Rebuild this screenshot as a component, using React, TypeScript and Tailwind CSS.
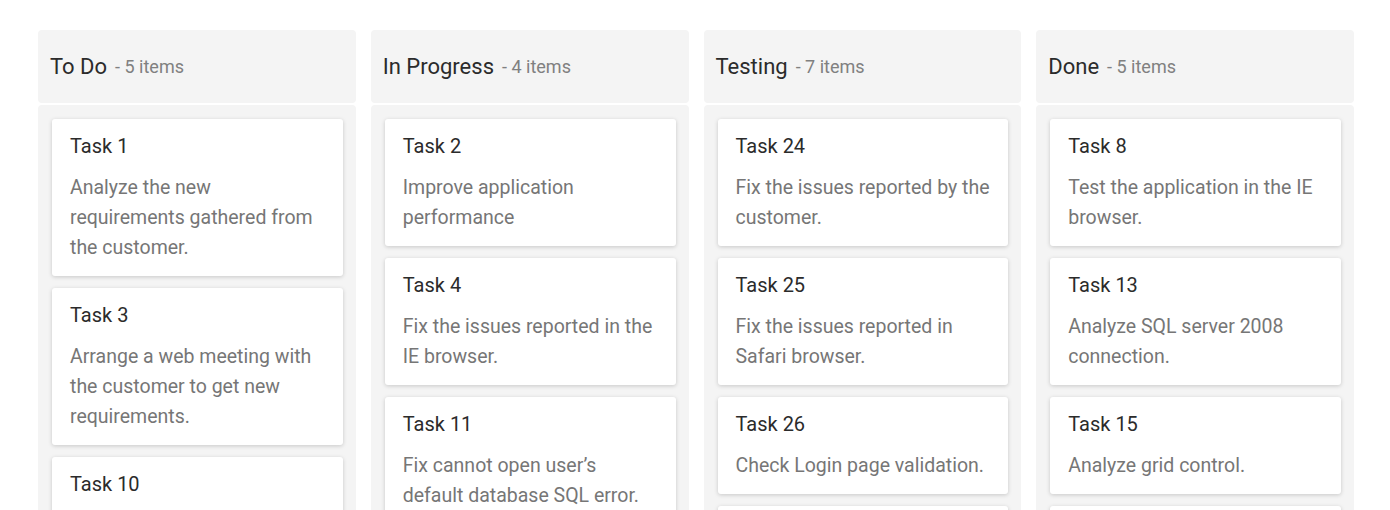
import React from 'react';

type Card = { title: string; summary: string };
type Column = { name: string; cards: Card[] };

const columns: Column[] = [
  {
    name: 'To Do',
    cards: [
      { title: 'Task 1', summary: 'Analyze the new requirements gathered from the customer.' },
      { title: 'Task 3', summary: 'Arrange a web meeting with the customer to get new requirements.' },
      { title: 'Task 10', summary: 'Analyze the new requirements gathered from the customer.' },
      { title: 'Task 19', summary: 'Show the retrieved data from the server in grid control.' },
      { title: 'Task 22', summary: 'Fix the filtering issues reported in safari.' },
    ],
  },
  {
    name: 'In Progress',
    cards: [
      { title: 'Task 2', summary: 'Improve application performance' },
      { title: 'Task 4', summary: 'Fix the issues reported in the IE browser.' },
      { title: 'Task 11', summary: 'Fix cannot open user’s default database SQL error.' },
      { title: 'Task 21', summary: 'Validate the registration form.' },
    ],
  },
  {
    name: 'Testing',
    cards: [
      { title: 'Task 24', summary: 'Fix the issues reported by the customer.' },
      { title: 'Task 25', summary: 'Fix the issues reported in Safari browser.' },
      { title: 'Task 26', summary: 'Check Login page validation.' },
      { title: 'Task 27', summary: 'Test the application in the IE browser.' },
      { title: 'Task 28', summary: 'Analyze stored procedure.' },
      { title: 'Task 29', summary: 'Validate the data in grid control.' },
      { title: 'Task 30', summary: 'Check the login functionality.' },
    ],
  },
  {
    name: 'Done',
    cards: [
      { title: 'Task 8', summary: 'Test the application in the IE browser.' },
      { title: 'Task 13', summary: 'Analyze SQL server 2008 connection.' },
      { title: 'Task 15', summary: 'Analyze grid control.' },
      { title: 'Task 16', summary: 'Stored procedure for initial data binding of the grid.' },
      { title: 'Task 20', summary: 'Improve the performance of the editing functionality.' },
    ],
  },
];

const App = () => {
  return (
    <div className="bg-white min-h-screen pt-[30px] pl-[38px] pr-[36px] font-['Roboto',_'Liberation_Sans',_sans-serif]">
      <div className="flex gap-[15px]">
        {columns.map((col) => (
          <div key={col.name} className="flex-1 min-w-0 flex flex-col gap-[2px]">
            {/* column header */}
            <div className="h-[73px] bg-[#f4f4f4] rounded-[4px] flex items-center pl-3">
              <span className="text-[22px] text-[#2b2b2b]">{col.name}</span>
              <span className="ml-2 text-[18px] text-[#808080]">- {col.cards.length} items</span>
            </div>

            <div className="bg-[#f4f4f4] rounded-[4px] pt-[14px] pl-[14px] pr-[13px] pb-4 flex flex-col gap-3">
              {col.cards.map((card) => (
                <div
                  key={card.title}
                  className="bg-white rounded-[3px] shadow-[0_1px_4px_rgba(0,0,0,0.18)] pt-[14px] pb-[13px] pl-[18px] pr-4"
                >
                  <div className="text-[20px] leading-[26px] text-[#2b2b2b]">{card.title}</div>
                  <p className="mt-[14px] text-[19.5px] leading-[30px] text-[#767676]">{card.summary}</p>
                </div>
              ))}
            </div>
          </div>
        ))}
      </div>
    </div>
  );
};

export default App;
